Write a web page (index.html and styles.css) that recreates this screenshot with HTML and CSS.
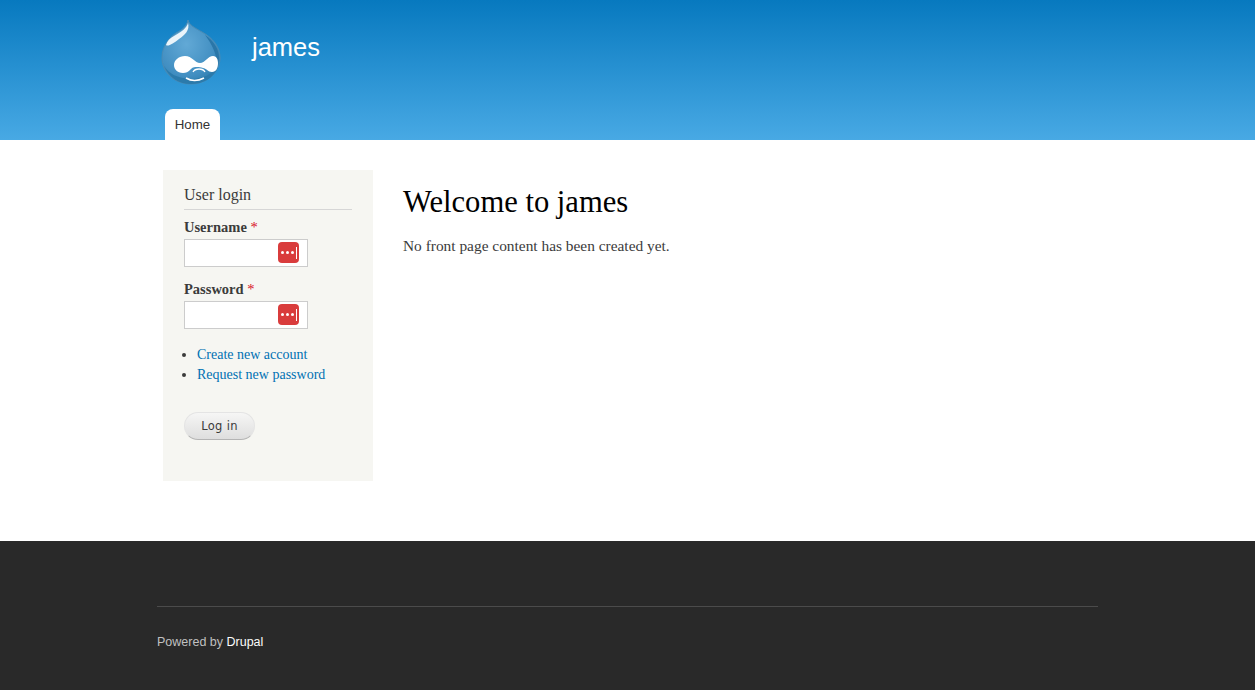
FILE: index.html
```html
<!DOCTYPE html>
<html lang="en">
<head>
    <meta charset="UTF-8">
    <title>Welcome to james | james</title>
    <link rel="stylesheet" href="styles.css">
</head>
<body>
    <header class="site-header">
        <div class="wrap">
            <div class="branding">
                <svg class="logo" width="60" height="68" viewBox="0 0 60 68" aria-label="Home">
                    <defs>
                        <radialGradient id="drop" cx="0.42" cy="0.38" r="0.7">
                            <stop offset="0" stop-color="#62a9d6"/>
                            <stop offset="0.7" stop-color="#428fc2"/>
                            <stop offset="1" stop-color="#2a78a8"/>
                        </radialGradient>
                    </defs>
                    <path d="M27 2C28 7 34 10 41 14C52 20 59 29 59 40C59 55 45 66 30 66C14 66 1 55 1 40C1 28 8 20 15 15C21 12 26 8 27 2Z" fill="url(#drop)" stroke="#4b8bb4"/>
                    <path d="M27 5C26 10 20 14 13 18C9 20 6 23 5 27C7 29 13 25 18 21C24 17 29 12 27 5Z" fill="#eaf4fa"/>
                    <path d="M44 17C53 23 58 31 58 40C58 43 57 45 56 46C56 37 51 26 44 17Z" fill="#2a76a8"/>
                    <path d="M3 48C8 56 16 60 30 61C42 61 51 56 57 49C53 60 42 66 30 66C17 66 8 59 3 48Z" fill="#2b7aab"/>
                    <path d="M24 38C31 38 34 45 39 45C44 45 47 38 52 38C56 38 57 42 57 45C57 50 55 54 51 54C47 54 45 50 42 50C40 49 38 49 36 49C34 49 32 49 30 51C27 54 25 55 22 55C16 55 13 51 13 47C13 42 18 38 24 38Z" fill="#fff"/>
                    <path d="M32 54C34 50 42 50 44 54" fill="none" stroke="#fff" stroke-width="1.3"/>
                    <path d="M25 60C30 63 37 63 43 60" fill="none" stroke="#fff" stroke-width="1.6"/>
                </svg>
                <a class="site-name" href="#">james</a>
            </div>
            <nav class="main-menu">
                <a class="tab" href="#">Home</a>
            </nav>
        </div>
    </header>

    <div class="wrap content">
        <aside class="sidebar">
            <h2 class="block-title">User login</h2>
            <form>
                <div class="form-item">
                    <label>Username <span class="req">*</span></label>
                    <div class="field">
                        <input type="text">
                        <span class="pw-icon"><i></i><i></i><i></i><b></b></span>
                    </div>
                </div>
                <div class="form-item">
                    <label>Password <span class="req">*</span></label>
                    <div class="field">
                        <input type="password">
                        <span class="pw-icon"><i></i><i></i><i></i><b></b></span>
                    </div>
                </div>
                <ul class="links">
                    <li><a href="#">Create new account</a></li>
                    <li><a href="#">Request new password</a></li>
                </ul>
                <button class="btn" type="button">Log in</button>
            </form>
        </aside>
        <main class="main">
            <h1>Welcome to james</h1>
            <p>No front page content has been created yet.</p>
        </main>
    </div>

    <footer class="site-footer">
        <div class="wrap">
            <div class="credit">Powered by <a href="#">Drupal</a></div>
        </div>
    </footer>
</body>
</html>
```

FILE: styles.css
```css
body {
    margin: 0;
    background-color: #fff;
    color: #3b3b3b;
    font-family: "Liberation Serif", serif;
    font-size: 15px;
}

a {
    color: #0071b3;
    text-decoration: none;
}

.wrap {
    width: 941px;
    margin: 0 auto;
}

/* header */
.site-header {
    height: 140px;
    background: linear-gradient(#0779bf, #48a9e4);
    font-family: "Liberation Sans", sans-serif;
}

.site-header .wrap {
    height: 100%;
    display: flex;
    flex-direction: column;
    justify-content: space-between;
}

.branding {
    display: flex;
    align-items: flex-start;
    padding: 18px 0 0 4px;
}

.site-name {
    color: #fff;
    font-size: 25.5px;
    line-height: 28px;
    margin: 15px 0 0 31px;
}

.main-menu {
    display: flex;
    padding-left: 8px;
}

.tab {
    width: 55px;
    height: 31px;
    box-sizing: border-box;
    padding-top: 8px;
    background-color: #fff;
    border-radius: 8px 8px 0 0;
    color: #333;
    font-size: 13.3px;
    line-height: 16px;
    text-align: center;
}

/* content */
.content {
    display: flex;
    align-items: flex-start;
    gap: 30px;
    padding: 30px 0 60px;
}

.sidebar {
    width: 210px;
    height: 311px;
    margin-left: 6px;
    box-sizing: border-box;
    padding: 15px 21px 0;
    background-color: #f6f6f2;
}

.block-title {
    margin: 0 0 8px;
    padding-bottom: 5px;
    border-bottom: 1px solid #d6d6d6;
    font-size: 16px;
    line-height: 19px;
    font-weight: normal;
}

.form-item {
    margin-bottom: 13px;
}

.form-item label {
    display: block;
    font-weight: bold;
    font-size: 14.5px;
    line-height: 18px;
    margin-bottom: 3px;
}

.req {
    color: #d8101f;
    font-weight: normal;
}

.field {
    position: relative;
    width: 124px;
    height: 28px;
}

.field input {
    display: block;
    width: 100%;
    height: 100%;
    box-sizing: border-box;
    padding: 0;
    background-color: #fff;
    border: 1px solid #ccc;
}

.pw-icon {
    position: absolute;
    top: 3px;
    right: 9px;
    width: 21px;
    height: 21px;
    display: flex;
    align-items: center;
    justify-content: center;
    gap: 2px;
    background-color: #d93c3c;
    border-radius: 4px;
}

.pw-icon i {
    width: 3px;
    height: 3px;
    background-color: #fff;
    border-radius: 50%;
}

.pw-icon b {
    width: 1px;
    height: 12px;
    background-color: #fff;
}

.links {
    margin: 16px 0 27px;
    padding-left: 13px;
    font-size: 14px;
    line-height: 20px;
}

.btn {
    display: block;
    width: 71px;
    height: 28px;
    padding: 0;
    border: 1px solid #e4e4e4;
    border-bottom-color: #b4b4b4;
    border-radius: 14px;
    background: linear-gradient(#f6f6f5, #dedede);
    color: #3a3a3a;
    font-family: "DejaVu Sans", sans-serif;
    font-size: 11.5px;
    letter-spacing: 0.3px;
}

.main {
    padding-top: 14px;
    color: #3b3b3b;
}

.main h1 {
    margin: 0 0 16px;
    color: #000;
    font-size: 30.6px;
    line-height: 36px;
    font-weight: normal;
}

.main p {
    margin: 0;
    font-size: 15.4px;
    line-height: 20px;
}

/* footer */
.site-footer {
    height: 149px;
    box-sizing: border-box;
    padding-top: 65px;
    background-color: #292929;
    font-family: "Liberation Sans", sans-serif;
}

.credit {
    padding-top: 28px;
    border-top: 1px solid #4b4b4b;
    color: #c0c0c0;
    font-size: 12.5px;
    line-height: 14px;
}

.credit a {
    color: #fcfcfc;
}
```
